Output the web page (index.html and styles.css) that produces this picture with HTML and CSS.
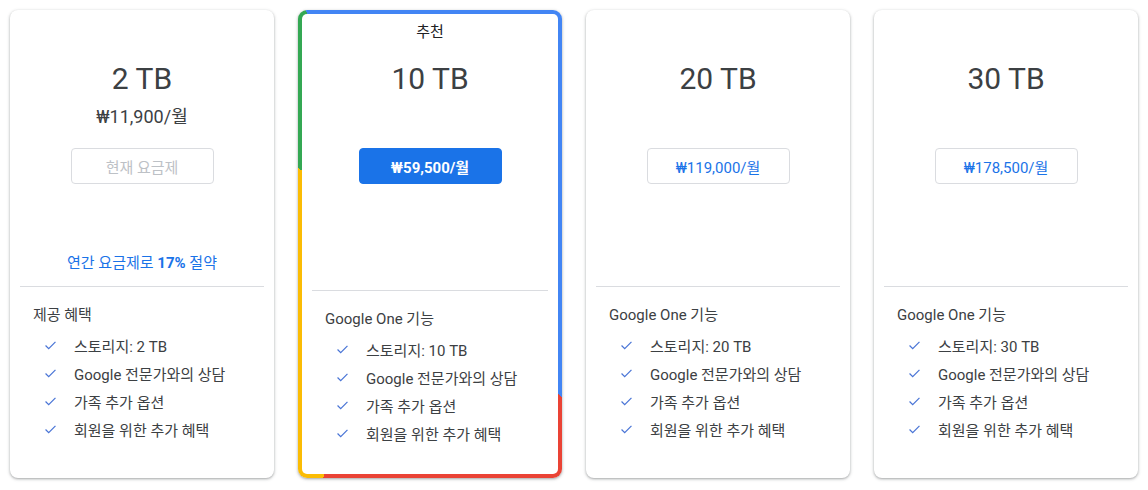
FILE: index.html
```html
<!DOCTYPE html>
<html lang="ko">
<head>
<meta charset="utf-8">
<link rel="stylesheet" href="styles.css">
</head>
<body>
<div class="plans">
  <section class="card">
    <div class="top">
      <div class="title">2 TB</div>
      <div class="price">₩11,900/월</div>
      <button class="btn btn-disabled">현재 요금제</button>
      <div class="save">연간 요금제로 <b>17%</b> 절약</div>
    </div>
    <div class="divider"></div>
    <div class="bottom">
      <div class="heading">제공 혜택</div>
      <ul class="features">
        <li><svg class="check" viewBox="0 0 14 10"><polyline points="1.5,5 5,8.5 12.5,1"/></svg>스토리지: 2 TB</li>
        <li><svg class="check" viewBox="0 0 14 10"><polyline points="1.5,5 5,8.5 12.5,1"/></svg>Google 전문가와의 상담</li>
        <li><svg class="check" viewBox="0 0 14 10"><polyline points="1.5,5 5,8.5 12.5,1"/></svg>가족 추가 옵션</li>
        <li><svg class="check" viewBox="0 0 14 10"><polyline points="1.5,5 5,8.5 12.5,1"/></svg>회원을 위한 추가 혜택</li>
      </ul>
    </div>
  </section>

  <section class="card card-featured">
    <div class="top">
      <div class="badge">추천</div>
      <div class="title">10 TB</div>
      <div class="price"></div>
      <button class="btn btn-primary">₩59,500/월</button>
    </div>
    <div class="divider"></div>
    <div class="bottom">
      <div class="heading">Google One 기능</div>
      <ul class="features">
        <li><svg class="check" viewBox="0 0 14 10"><polyline points="1.5,5 5,8.5 12.5,1"/></svg>스토리지: 10 TB</li>
        <li><svg class="check" viewBox="0 0 14 10"><polyline points="1.5,5 5,8.5 12.5,1"/></svg>Google 전문가와의 상담</li>
        <li><svg class="check" viewBox="0 0 14 10"><polyline points="1.5,5 5,8.5 12.5,1"/></svg>가족 추가 옵션</li>
        <li><svg class="check" viewBox="0 0 14 10"><polyline points="1.5,5 5,8.5 12.5,1"/></svg>회원을 위한 추가 혜택</li>
      </ul>
    </div>
  </section>

  <section class="card">
    <div class="top">
      <div class="title">20 TB</div>
      <div class="price"></div>
      <button class="btn btn-outline">₩119,000/월</button>
    </div>
    <div class="divider"></div>
    <div class="bottom">
      <div class="heading">Google One 기능</div>
      <ul class="features">
        <li><svg class="check" viewBox="0 0 14 10"><polyline points="1.5,5 5,8.5 12.5,1"/></svg>스토리지: 20 TB</li>
        <li><svg class="check" viewBox="0 0 14 10"><polyline points="1.5,5 5,8.5 12.5,1"/></svg>Google 전문가와의 상담</li>
        <li><svg class="check" viewBox="0 0 14 10"><polyline points="1.5,5 5,8.5 12.5,1"/></svg>가족 추가 옵션</li>
        <li><svg class="check" viewBox="0 0 14 10"><polyline points="1.5,5 5,8.5 12.5,1"/></svg>회원을 위한 추가 혜택</li>
      </ul>
    </div>
  </section>

  <section class="card">
    <div class="top">
      <div class="title">30 TB</div>
      <div class="price"></div>
      <button class="btn btn-outline">₩178,500/월</button>
    </div>
    <div class="divider"></div>
    <div class="bottom">
      <div class="heading">Google One 기능</div>
      <ul class="features">
        <li><svg class="check" viewBox="0 0 14 10"><polyline points="1.5,5 5,8.5 12.5,1"/></svg>스토리지: 30 TB</li>
        <li><svg class="check" viewBox="0 0 14 10"><polyline points="1.5,5 5,8.5 12.5,1"/></svg>Google 전문가와의 상담</li>
        <li><svg class="check" viewBox="0 0 14 10"><polyline points="1.5,5 5,8.5 12.5,1"/></svg>가족 추가 옵션</li>
        <li><svg class="check" viewBox="0 0 14 10"><polyline points="1.5,5 5,8.5 12.5,1"/></svg>회원을 위한 추가 혜택</li>
      </ul>
    </div>
  </section>
</div>
</body>
</html>
```

FILE: styles.css
```css
* { box-sizing: border-box; }

html, body {
  margin: 0;
  background: #fff;
}

body {
  padding: 10px;
  font-family: Roboto, "Noto Sans CJK KR", sans-serif;
  color: #3c4043;
  font-size: 15px;
}

.plans {
  display: flex;
  gap: 24px;
}

.card {
  width: 264px;
  height: 468px;
  border-radius: 8px;
  background: #fff;
  box-shadow: 0 1px 2px 0 rgba(60, 64, 67, 0.3), 0 1px 3px 1px rgba(60, 64, 67, 0.15);
  display: flex;
  flex-direction: column;
}

.card-featured {
  border: 4px solid transparent;
  border-radius: 9px;
  background:
    linear-gradient(#fff, #fff) padding-box,
    conic-gradient(from 0deg at 132px 234px,
      #4285f4 0deg 139.4deg,
      #ea4335 139.4deg 204.6deg,
      #fbbc04 204.6deg 299.9deg,
      #34a853 299.9deg 332deg,
      #4285f4 332deg 360deg) border-box;
}

.top {
  height: 276px;
  padding-top: 49px;
  display: flex;
  flex-direction: column;
  align-items: center;
}

.card-featured .top {
  padding-top: 8px;
}

.badge {
  height: 20px;
  line-height: 20px;
  font-size: 15px;
  color: #202124;
  margin-bottom: 17px;
}

.title {
  height: 40px;
  line-height: 40px;
  font-size: 30px;
  color: #3c4043;
}

.price {
  height: 24px;
  line-height: 24px;
  margin-top: 6px;
  font-size: 18px;
  color: #3c4043;
}

.btn {
  margin-top: 19px;
  width: 143px;
  height: 36px;
  border-radius: 4px;
  font-family: inherit;
  font-size: 15px;
  padding: 0;
  background: #fff;
  border: 1px solid #dadce0;
}

.btn-disabled {
  color: #bdc1c6;
}

.btn-outline {
  color: #1a73e8;
}

.btn-primary {
  background: #1a73e8;
  border-color: #1a73e8;
  color: #fff;
  font-weight: 700;
}

.save {
  margin-top: 69px;
  line-height: 20px;
  font-size: 15px;
  color: #1a73e8;
}

.save b {
  font-weight: 700;
}

.divider {
  height: 1px;
  margin: 0 10px;
  background: #dadce0;
}

.bottom {
  padding: 18px 0 0 23px;
}

.heading {
  line-height: 20px;
  font-size: 15px;
  color: #3c4043;
}

.features {
  list-style: none;
  margin: 6px 0 0;
  padding: 0 0 0 11px;
}

.features li {
  display: flex;
  align-items: center;
  height: 28px;
  font-size: 15px;
  color: #3c4043;
}

.check {
  width: 13px;
  height: 9px;
  margin-right: 17px;
  fill: none;
  stroke: #4a75d6;
  stroke-width: 1.4;
}
```
